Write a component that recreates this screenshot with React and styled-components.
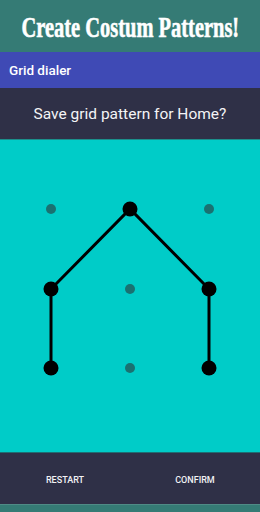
import styled, { createGlobalStyle } from "styled-components";

const Global = createGlobalStyle`
  html, body { margin: 0; padding: 0; }
  body { width: 260px; height: 512px; overflow: hidden; font-family: Roboto, "Noto Sans", sans-serif; }
`;

const Screen = styled.div`
  width: 260px;
  height: 512px;
  display: flex;
  flex-direction: column;
  background: #357b75;
`;

const Banner = styled.div`
  height: 52px;
  flex-shrink: 0;
  display: flex;
  align-items: center;
  justify-content: center;
  overflow: hidden;
`;

const BannerText = styled.span`
  color: #fff;
  font-family: "Liberation Serif", serif;
  font-weight: bold;
  font-size: 29px;
  white-space: nowrap;
  display: inline-block;
  transform: scaleX(0.705);
  margin-top: 2px;
  -webkit-text-stroke: 0.6px #fff;
`;

const AppBar = styled.div`
  height: 36px;
  flex-shrink: 0;
  background: #3f4ab5;
  color: #fff;
  font-size: 13.5px;
  font-weight: 500;
  display: flex;
  align-items: center;
  padding-left: 9px;
`;

const Prompt = styled.div`
  height: 51px;
  flex-shrink: 0;
  background: #2f3047;
  color: #f4f4f6;
  font-size: 15.5px;
  display: flex;
  align-items: center;
  justify-content: center;
  border-bottom: 1px solid #1c8f8c;
`;

const Pad = styled.div`
  flex: 1;
  background: #00ccc8;
  display: flex;
  align-items: center;
  justify-content: center;
  border-bottom: 1px solid #1f6f73;
`;

const Footer = styled.div`
  height: 51px;
  flex-shrink: 0;
  background: #2f3047;
  display: grid;
  grid-template-columns: 1fr 1fr;
  align-items: center;
  padding-top: 3px;
  box-sizing: border-box;
`;

const Action = styled.button`
  background: none;
  border: none;
  color: #f2f2f4;
  font-family: Roboto, sans-serif;
  font-weight: 500;
  font-size: 9px;
  padding: 0;
  text-align: center;
`;

const BottomStrip = styled.div`
  height: 7px;
  flex-shrink: 0;
  background: #357b75;
  border-top: 1px solid #4f8b86;
`;

const cols = [51, 130, 209];
const rows = [69, 149, 228];
const path = [
  [0, 2],
  [0, 1],
  [1, 0],
  [2, 1],
  [2, 2],
];

function PatternGrid() {
  const active = new Set(path.map(([c, r]) => `${c}-${r}`));
  const pts = path.map(([c, r]) => `${cols[c]},${rows[r]}`).join(" ");
  return (
    <svg width="260" height="312" viewBox="0 0 260 312">
      <polyline points={pts} fill="none" stroke="#000" strokeWidth="3" />
      {rows.map((y, r) =>
        cols.map((x, c) =>
          active.has(`${c}-${r}`) ? (
            <circle key={`${c}-${r}`} cx={x} cy={y} r="7.5" fill="#000" />
          ) : (
            <circle key={`${c}-${r}`} cx={x} cy={y} r="5" fill="#1a7171" />
          )
        )
      )}
    </svg>
  );
}

export default function App() {
  return (
    <>
      <Global />
      <Screen>
        <Banner>
          <BannerText>Create Costum Patterns!</BannerText>
        </Banner>
        <AppBar>Grid dialer</AppBar>
        <Prompt>Save grid pattern for Home?</Prompt>
        <Pad>
          <PatternGrid />
        </Pad>
        <Footer>
          <Action>RESTART</Action>
          <Action>CONFIRM</Action>
        </Footer>
        <BottomStrip />
      </Screen>
    </>
  );
}
